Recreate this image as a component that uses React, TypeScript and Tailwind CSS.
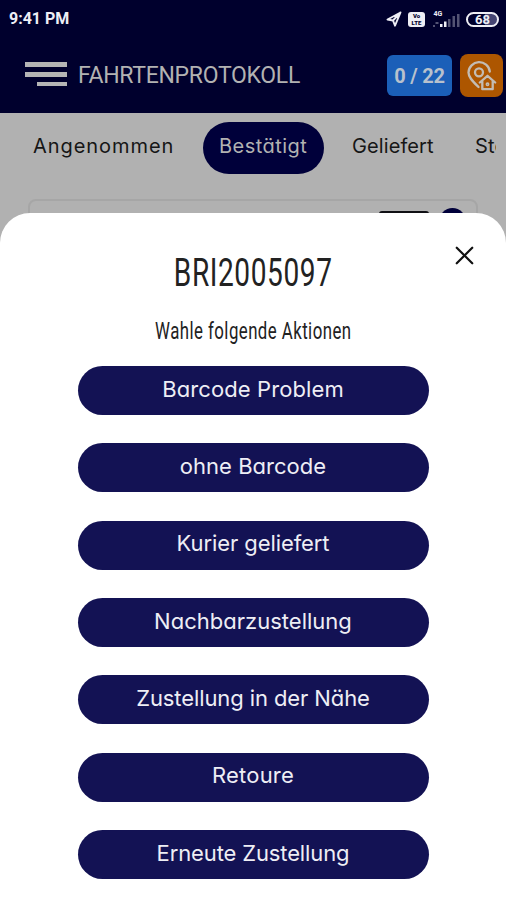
import { X } from 'lucide-react';

const tabs = [
  { label: 'Angenommen', style: 'w-[203px] pl-[33px] tracking-[0.95px]' },
  { label: 'Bestätigt', style: 'w-[121px] pl-4 tracking-[0.45px]', active: true },
  { label: 'Geliefert', style: 'w-[151px] pl-7 tracking-[0.1px]' },
  { label: 'Sto', style: 'w-[21px] overflow-hidden tracking-[0.2px]' },
];

const actions = [
  { label: 'Barcode Problem', tracking: 'tracking-[0.1px]' },
  { label: 'ohne Barcode', tracking: 'tracking-[0.02px]' },
  { label: 'Kurier geliefert', tracking: 'tracking-[-0.08px]' },
  { label: 'Nachbarzustellung', tracking: 'tracking-[0.01px]' },
  { label: 'Zustellung in der Nähe', tracking: 'tracking-[-0.1px]' },
  { label: 'Retoure', tracking: 'tracking-[0.2px]' },
  { label: 'Erneute Zustellung', tracking: 'tracking-[-0.13px]' },
];

function StatusBar() {
  return (
    <div className="flex h-[38px] items-center justify-between pl-[9px] pr-[7px] text-[#eeeef5]">
      <span className="text-base font-bold">9:41 PM</span>
      <div className="flex items-center">
        <svg className="mr-[6px] h-4 w-4" viewBox="0 0 16 16" fill="none" stroke="currentColor" strokeWidth="1.9" strokeLinejoin="round">
          <path d="M14.5 1.5 1.5 8.5l5.5 1 2 5.2Z M7 9.5l7.5-8" />
        </svg>
        {/* VoLTE */}
        <div className="mr-[7px] flex h-[15px] w-[17px] flex-col items-center justify-center rounded-[3px] bg-[#eeeef5] text-[6px] font-black leading-[7px] text-[#00002d]">
          <span>Vo</span>
          <span>LTE</span>
        </div>
        {/* Signal strength */}
        <svg className="mr-[6px] h-[18px] w-[28px]" viewBox="0 0 28 18" fill="currentColor">
          <text x="1.5" y="6" fontSize="7" fontWeight="700">4G</text>
          <path d="M8 14h2.500v3H8zM12 11.500h2.500v5.500H12z" />
          <path d="M1 15h2v2H1zM3.500 12h3v2h-3zM16 9h2.500v8H16zM20.500 6h2.500v11h-2.500zM25 4h2.500v13h-2.500z" opacity=".35" />
        </svg>
        <div className="flex h-[15px] w-[33px] items-center justify-center rounded-full border-2 border-[#eeeef5] bg-linear-to-r from-[#00002d] from-60% to-[#454573] to-60% text-[13px] font-bold leading-none">
          68
        </div>
      </div>
    </div>
  );
}

function Header() {
  return (
    <header className="h-[113px] bg-[#00002d] font-[Roboto,sans-serif]">
      <StatusBar />
      <div className="flex h-[75px] items-center pl-[25px] pr-[3px]">
        <div className="mr-[11px] flex w-[42px] flex-col items-end gap-[5px] pb-[3px]">
          <span className="h-[5px] w-full bg-[#b5b5b5]" />
          <span className="h-[5px] w-full bg-[#b5b5b5]" />
          <span className="h-[4px] w-[30px] bg-[#b5b5b5]" />
        </div>
        <h1 className="text-[23px] leading-none tracking-[-0.3px] text-[#b2b2b2]">FAHRTENPROTOKOLL</h1>
        <div className="ml-auto flex h-[41px] w-[65px] items-center justify-center rounded-[6px] bg-[#1b5fb8] text-[20px] font-bold tracking-[-0.2px] text-[#b8c1cd]">
          0 / 22
        </div>
        <div className="ml-2 flex h-[43px] w-[43px] items-center justify-center rounded-[8px] bg-[#ad5600]">
          <svg className="h-[30px] w-[30px]" viewBox="0 0 30 30" fill="none" stroke="#c3bcb3" strokeWidth="2.300" strokeLinecap="round" strokeLinejoin="round">
            <path d="M11.500 26C6 20.500 1.500 16.500 1.500 11.500A10.700 10.700 0 0 1 22.800 10.500" />
            <circle cx="12" cy="11.300" r="4" />
            <path d="m12.800 21.500 7.700-6.700 7.700 6.700M15.300 20.500v7.700h10.400v-7.700" />
            <circle cx="20.500" cy="23.300" r=".8" />
          </svg>
        </div>
      </div>
    </header>
  );
}

function Tabs() {
  return (
    <nav className="mr-[10px] flex h-[70px] items-center overflow-hidden">
      {tabs.map((tab) => (
        <div
          key={tab.label}
          className={`${tab.style} flex h-[52px] shrink-0 items-center whitespace-nowrap pb-[5px] text-[20px] ${
            tab.active ? 'rounded-full bg-[#00003a] text-[#b2b2b2]' : 'text-[#161616]'
          }`}
        >
          {tab.label}
        </div>
      ))}
    </nav>
  );
}

function ActionSheet() {
  return (
    <section className="absolute inset-x-0 bottom-0 top-[213px] flex flex-col items-center rounded-t-[30px] bg-white">
      <button className="absolute right-[26px] top-[27px] text-[#111]">
        <X size={31} strokeWidth={1.7} />
      </button>
      <h2 className="mt-[38px] h-[44px] origin-center scale-x-[0.72] whitespace-nowrap font-[Roboto,sans-serif] text-[39px] leading-[44px] tracking-[0.8px] text-[#222]">
        BRI2005097
      </h2>
      <p className="mt-[22px] h-[28px] origin-center scale-x-[0.7] whitespace-nowrap font-[Roboto,sans-serif] text-[24px] leading-[28px] tracking-[0.65px] text-[#222]">
        Wahle folgende Aktionen
      </p>
      <div className="mt-[21px] flex w-[351px] flex-col gap-[28.35px]">
        {actions.map((action) => (
          <button
            key={action.label}
            className={`${action.tracking} flex h-[49px] items-center justify-center whitespace-nowrap rounded-full bg-[#131254] pb-[3px] text-[22px] text-[#eeeef5]`}
          >
            {action.label}
          </button>
        ))}
      </div>
    </section>
  );
}

export default function App() {
  return (
    <main className="relative h-[900px] w-[506px] overflow-hidden bg-[#b1b1b1] font-[Inter,sans-serif] [font-feature-settings:'cv11']">
      <Header />
      <Tabs />
      {/* Top edge of the first delivery card, mostly covered by the sheet */}
      <div className="mx-[28px] mt-[16px] flex h-[120px] items-start justify-end gap-[10px] rounded-[8px] border-2 border-[#a6a6a6] pr-[10px] pt-[8px]">
        <div className="mt-[2px] h-6 w-[50px] rounded-[3px] bg-[#101014]" />
        <div className="-mt-px h-[27px] w-[27px] rounded-full bg-[#00003a]" />
      </div>
      <ActionSheet />
    </main>
  );
}
